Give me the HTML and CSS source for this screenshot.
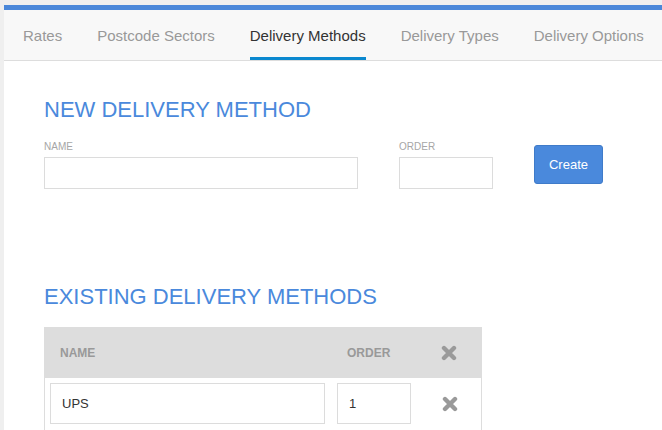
FILE: index.html
```html
<!DOCTYPE html>
<html>
<head>
<meta charset="utf-8">
<link rel="stylesheet" href="styles.css">
</head>
<body>
<div class="page">
  <div class="topbar"></div>
  <nav class="tabs">
    <a class="tab">Rates</a>
    <a class="tab">Postcode Sectors</a>
    <a class="tab active">Delivery Methods</a>
    <a class="tab">Delivery Types</a>
    <a class="tab">Delivery Options</a>
  </nav>
  <main class="content">
    <h2 class="heading first">NEW DELIVERY METHOD</h2>
    <div class="form-row">
      <div class="field name-field">
        <label class="label">NAME</label>
        <input class="input" type="text">
      </div>
      <div class="field order-field">
        <label class="label">ORDER</label>
        <input class="input" type="text">
      </div>
      <button class="btn">Create</button>
    </div>

    <h2 class="heading second">EXISTING DELIVERY METHODS</h2>
    <div class="table">
      <div class="row head">
        <div class="cell c-name">NAME</div>
        <div class="cell c-order">ORDER</div>
        <div class="cell c-del">
          <svg class="x" width="16" height="16" viewBox="0 0 16 16"><path d="M3 3 L13 13 M13 3 L3 13" stroke="#9a9a9a" stroke-width="4.4" stroke-linecap="round" fill="none"/></svg>
        </div>
      </div>
      <div class="row body">
        <div class="cell c-name"><input class="input cell-input" type="text" value="UPS"></div>
        <div class="cell c-order"><input class="input cell-input order-in" type="text" value="1"></div>
        <div class="cell c-del">
          <svg class="x" width="16" height="16" viewBox="0 0 16 16"><path d="M3 3 L13 13 M13 3 L3 13" stroke="#9a9a9a" stroke-width="4.4" stroke-linecap="round" fill="none"/></svg>
        </div>
      </div>
    </div>
  </main>
</div>
</body>
</html>
```

FILE: styles.css
```css
* { box-sizing: border-box; }
html, body { margin: 0; padding: 0; }
body {
  background: #efefef;
  font-family: "Liberation Sans", Arial, sans-serif;
  color: #333;
}
.page {
  margin: 5px 0 0 4px;
  background: #fff;
  min-height: 425px;
}
.topbar {
  height: 5px;
  background: #4a87d9;
}
.tabs {
  display: flex;
  height: 51px;
  background: #f8f8f8;
  border-bottom: 1px solid #dddddd;
  padding-left: 1.5px;
}
.tab {
  display: flex;
  align-items: center;
  margin: 0 17.5px;
  padding-top: 3px;
  font-size: 15px;
  color: #999;
  border-bottom: 3px solid transparent;
  height: 50px;
  white-space: nowrap;
}
.tab.active {
  color: #333;
  border-bottom-color: #0a88cf;
}
.content {
  padding: 0 0 0 40px;
}
.heading {
  margin: 0;
  font-weight: normal;
  font-size: 22px;
  line-height: 25px;
  color: #4a89dc;
}
.heading.first { padding-top: 36px; }
.heading.second { margin-top: 95px; }
.form-row {
  display: flex;
  align-items: flex-start;
  margin-top: 19px;
}
.field { display: flex; flex-direction: column; }
.name-field { width: 314px; margin-right: 41px; }
.order-field { width: 94px; margin-right: 41px; }
.label {
  font-size: 10px;
  line-height: 12px;
  color: #a6a6a6;
  margin-bottom: 4px;
}
.input {
  height: 32px;
  border: 1px solid #dcdcdc;
  background: #fff;
  font-family: inherit;
  font-size: 13px;
  color: #333;
  padding: 0 11px;
  outline: none;
  border-radius: 0;
  width: 100%;
}
.btn {
  margin-top: 4px;
  width: 69px;
  height: 39px;
  background: #4a89dc;
  border: 1px solid #3f7bc9;
  border-radius: 3px;
  color: #fff;
  font-family: inherit;
  font-size: 13px;
  padding: 0;
}
.table {
  margin-top: 18px;
  width: 438px;
}
.row {
  display: grid;
  grid-template-columns: 287px 86px 65px;
}
.row.head {
  height: 51px;
  background: #dddddd;
  align-items: center;
}
.row.head .cell {
  font-size: 12px;
  font-weight: bold;
  color: #999;
  padding-left: 16px;
}
.row.head .c-del, .row.body .c-del {
  padding: 0;
  display: flex;
  justify-content: center;
  padding-right: 2px;
}
.row.body {
  border-left: 1px solid #dddddd;
  border-right: 1px solid #dddddd;
  padding-top: 5px;
  height: 60px;
}
.row.body .c-name { padding-left: 5px; padding-right: 7px; }
.row.body .c-order { padding-left: 5px; padding-right: 7px; }
.row.body .c-del { align-items: flex-start; padding-top: 13px; }
.cell-input {
  height: 41px;
}
.order-in { padding-left: 11px; }
.x { display: block; }
```
